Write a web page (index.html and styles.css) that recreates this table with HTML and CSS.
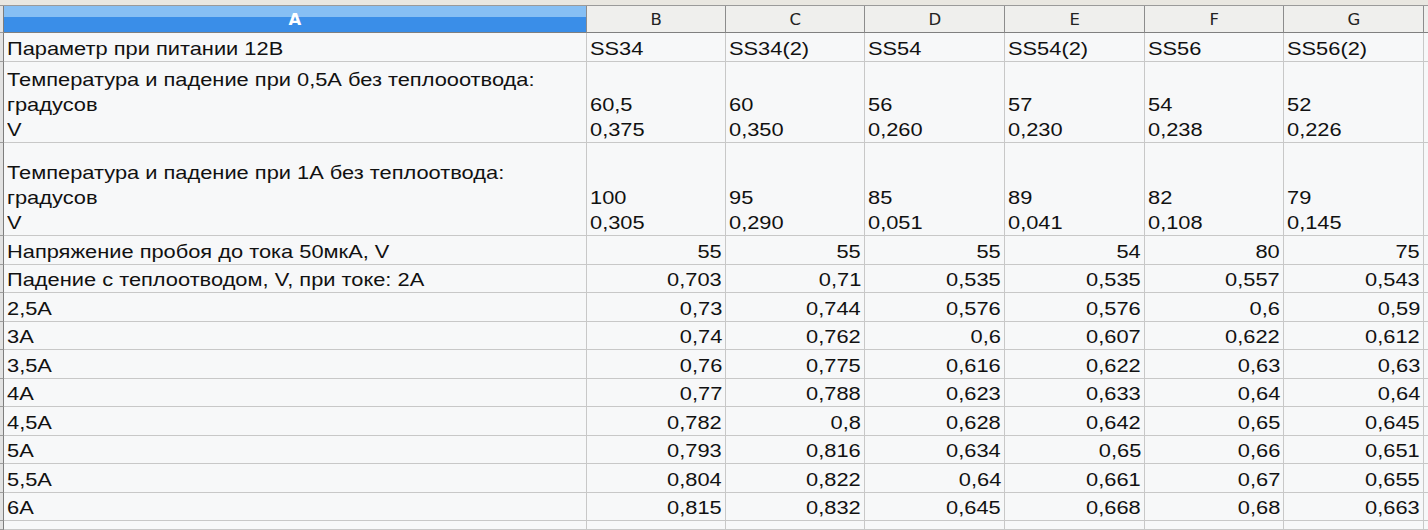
FILE: index.html
```html
<!DOCTYPE html>
<html lang="ru">
<head>
<meta charset="utf-8">
<title>Sheet</title>
<link rel="stylesheet" href="styles.css">
</head>
<body>
<div class="sheet">
  <div class="strip"></div>

  <div class="rh"></div>
  <div class="ch sel"><span class="h">A</span></div><div class="ch"><span class="h">B</span></div><div class="ch"><span class="h">C</span></div><div class="ch"><span class="h">D</span></div><div class="ch"><span class="h">E</span></div><div class="ch"><span class="h">F</span></div><div class="ch"><span class="h">G</span></div><div class="ch last"></div>

  <div class="rh"></div>
  <div class="c"><span class="t">Параметр при питании 12В</span></div><div class="c"><span class="t">SS34</span></div><div class="c"><span class="t">SS34(2)</span></div><div class="c"><span class="t">SS54</span></div><div class="c"><span class="t">SS54(2)</span></div><div class="c"><span class="t">SS56</span></div><div class="c"><span class="t">SS56(2)</span></div><div class="c last"></div>

  <div class="rh"></div>
  <div class="c"><span class="t">Температура и падение при 0,5А без теплооотвода:<br>градусов<br>V</span></div><div class="c"><span class="t">60,5<br>0,375</span></div><div class="c"><span class="t">60<br>0,350</span></div><div class="c"><span class="t">56<br>0,260</span></div><div class="c"><span class="t">57<br>0,230</span></div><div class="c"><span class="t">54<br>0,238</span></div><div class="c"><span class="t">52<br>0,226</span></div><div class="c last"></div>

  <div class="rh"></div>
  <div class="c"><span class="t">Температура и падение при 1А без теплоотвода:<br>градусов<br>V</span></div><div class="c"><span class="t">100<br>0,305</span></div><div class="c"><span class="t">95<br>0,290</span></div><div class="c"><span class="t">85<br>0,051</span></div><div class="c"><span class="t">89<br>0,041</span></div><div class="c"><span class="t">82<br>0,108</span></div><div class="c"><span class="t">79<br>0,145</span></div><div class="c last"></div>

  <div class="rh"></div>
  <div class="c"><span class="t">Напряжение пробоя до тока 50мкА, V</span></div><div class="c n"><span class="t">55</span></div><div class="c n"><span class="t">55</span></div><div class="c n"><span class="t">55</span></div><div class="c n"><span class="t">54</span></div><div class="c n"><span class="t">80</span></div><div class="c n"><span class="t">75</span></div><div class="c last"></div>

  <div class="rh"></div>
  <div class="c"><span class="t">Падение с теплоотводом, V, при токе: 2А</span></div><div class="c n"><span class="t">0,703</span></div><div class="c n"><span class="t">0,71</span></div><div class="c n"><span class="t">0,535</span></div><div class="c n"><span class="t">0,535</span></div><div class="c n"><span class="t">0,557</span></div><div class="c n"><span class="t">0,543</span></div><div class="c last"></div>

  <div class="rh"></div>
  <div class="c"><span class="t">2,5А</span></div><div class="c n"><span class="t">0,73</span></div><div class="c n"><span class="t">0,744</span></div><div class="c n"><span class="t">0,576</span></div><div class="c n"><span class="t">0,576</span></div><div class="c n"><span class="t">0,6</span></div><div class="c n"><span class="t">0,59</span></div><div class="c last"></div>

  <div class="rh"></div>
  <div class="c"><span class="t">3А</span></div><div class="c n"><span class="t">0,74</span></div><div class="c n"><span class="t">0,762</span></div><div class="c n"><span class="t">0,6</span></div><div class="c n"><span class="t">0,607</span></div><div class="c n"><span class="t">0,622</span></div><div class="c n"><span class="t">0,612</span></div><div class="c last"></div>

  <div class="rh"></div>
  <div class="c"><span class="t">3,5А</span></div><div class="c n"><span class="t">0,76</span></div><div class="c n"><span class="t">0,775</span></div><div class="c n"><span class="t">0,616</span></div><div class="c n"><span class="t">0,622</span></div><div class="c n"><span class="t">0,63</span></div><div class="c n"><span class="t">0,63</span></div><div class="c last"></div>

  <div class="rh"></div>
  <div class="c"><span class="t">4А</span></div><div class="c n"><span class="t">0,77</span></div><div class="c n"><span class="t">0,788</span></div><div class="c n"><span class="t">0,623</span></div><div class="c n"><span class="t">0,633</span></div><div class="c n"><span class="t">0,64</span></div><div class="c n"><span class="t">0,64</span></div><div class="c last"></div>

  <div class="rh"></div>
  <div class="c"><span class="t">4,5А</span></div><div class="c n"><span class="t">0,782</span></div><div class="c n"><span class="t">0,8</span></div><div class="c n"><span class="t">0,628</span></div><div class="c n"><span class="t">0,642</span></div><div class="c n"><span class="t">0,65</span></div><div class="c n"><span class="t">0,645</span></div><div class="c last"></div>

  <div class="rh"></div>
  <div class="c"><span class="t">5А</span></div><div class="c n"><span class="t">0,793</span></div><div class="c n"><span class="t">0,816</span></div><div class="c n"><span class="t">0,634</span></div><div class="c n"><span class="t">0,65</span></div><div class="c n"><span class="t">0,66</span></div><div class="c n"><span class="t">0,651</span></div><div class="c last"></div>

  <div class="rh"></div>
  <div class="c"><span class="t">5,5А</span></div><div class="c n"><span class="t">0,804</span></div><div class="c n"><span class="t">0,822</span></div><div class="c n"><span class="t">0,64</span></div><div class="c n"><span class="t">0,661</span></div><div class="c n"><span class="t">0,67</span></div><div class="c n"><span class="t">0,655</span></div><div class="c last"></div>

  <div class="rh"></div>
  <div class="c"><span class="t">6А</span></div><div class="c n"><span class="t">0,815</span></div><div class="c n"><span class="t">0,832</span></div><div class="c n"><span class="t">0,645</span></div><div class="c n"><span class="t">0,668</span></div><div class="c n"><span class="t">0,68</span></div><div class="c n"><span class="t">0,663</span></div><div class="c last"></div>

  <div class="rh"></div>
  <div class="c"></div><div class="c"></div><div class="c"></div><div class="c"></div><div class="c"></div><div class="c"></div><div class="c"></div><div class="c last"></div>
</div>
</body>
</html>
```
FILE: styles.css
```css
html, body {
  margin: 0;
  padding: 0;
  background: #f7f8f9;
  overflow: hidden;
}

.sheet {
  width: 1428px;
  height: 530px;
  display: grid;
  grid-template-columns: 4px 583px 139px 139px 140px 140px 139px 140px 1fr;
  grid-template-rows: 6px 27px 29px 81px 93px repeat(10, 28.5px) 1fr;
  font-family: "Liberation Sans", Arial, sans-serif;
  font-size: 18.67px;
  color: #111;
  overflow: hidden;
}

.strip {
  grid-column: 1 / -1;
  background: #e9e7e1;
  border-bottom: 1px solid #9a9a9a;
}

.rh {
  background: #e2e2e2;
  border-right: 1px solid #7d7d7d;
  border-bottom: 1px solid #9c9c9c;
}

.ch {
  box-sizing: border-box;
  background: #efefed;
  border-right: 1px solid #8c8c8c;
  border-bottom: 1px solid #808080;
  font-family: "DejaVu Sans", Verdana, sans-serif;
  font-size: 15px;
  color: #222;
  display: flex;
  align-items: center;
  justify-content: center;
  padding-top: 2px;
}

.ch .h {
  display: inline-block;
  transform: scaleX(1.1);
}

.ch.sel {
  background: linear-gradient(#86bff4 0, #86bff4 11px, #3a8ee8 11px, #3a8ee8 100%);
  color: #fff;
  font-weight: bold;
}

.ch.last {
  border-right: none;
}

.c {
  box-sizing: border-box;
  background: #f7f8f9;
  border-right: 1px solid #c8c8c8;
  border-bottom: 1px solid #c8c8c8;
  padding: 0 3px;
  line-height: 25px;
  white-space: nowrap;
  display: flex;
  align-items: flex-end;
  justify-content: flex-start;
}

.c.n {
  justify-content: flex-end;
}

.c.last {
  border-right: none;
}

.t {
  display: inline-block;
  transform: scaleX(1.17);
  transform-origin: left bottom;
}

.c.n .t {
  transform-origin: right bottom;
}
```
